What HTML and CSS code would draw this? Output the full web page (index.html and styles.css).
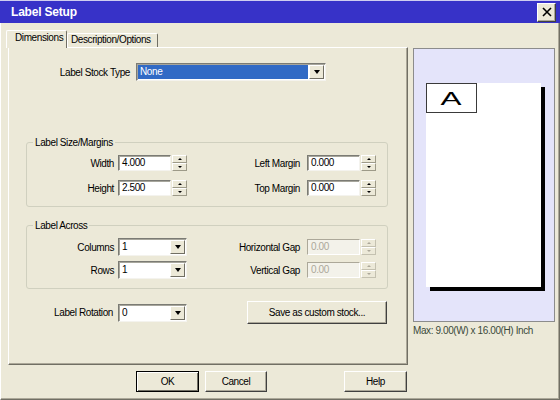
FILE: index.html
```html
<!DOCTYPE html>
<html>
<head>
<meta charset="utf-8">
<title>Label Setup</title>
<link rel="stylesheet" href="styles.css">
</head>
<body>
<div class="window">
  <div class="titlebar">
    <span class="title">Label Setup</span>
    <span class="close"><svg width="10" height="10" viewBox="0 0 10 10"><path d="M1 1L9 9M9 1L1 9" stroke="#000" stroke-width="1.6" fill="none"/></svg></span>
  </div>
  <div class="client">
    <div class="main">
      <div class="tabs">
        <div class="tab active">Dimensions</div>
        <div class="tab">Description/Options</div>
      </div>
      <div class="panel">
        <div class="stock-row">
          <span class="stock-lbl">Label Stock Type</span>
          <div class="combo stock-combo"><span class="combo-text sel">None</span><span class="drop"><i class="tri-down"></i></span></div>
        </div>

        <fieldset class="group g1">
          <legend>Label Size/Margins</legend>
          <div class="grid g1grid">
            <span class="lbl">Width</span>
            <div class="spin"><span class="spin-input">4.000</span><span class="spin-btns"><span class="sb"><i class="tri-up"></i></span><span class="sb"><i class="tri-dn"></i></span></span></div>
            <span class="lbl lbl2">Left Margin</span>
            <div class="spin"><span class="spin-input">0.000</span><span class="spin-btns"><span class="sb"><i class="tri-up"></i></span><span class="sb"><i class="tri-dn"></i></span></span></div>
            <span class="lbl">Height</span>
            <div class="spin"><span class="spin-input">2.500</span><span class="spin-btns"><span class="sb"><i class="tri-up"></i></span><span class="sb"><i class="tri-dn"></i></span></span></div>
            <span class="lbl lbl2">Top Margin</span>
            <div class="spin"><span class="spin-input">0.000</span><span class="spin-btns"><span class="sb"><i class="tri-up"></i></span><span class="sb"><i class="tri-dn"></i></span></span></div>
          </div>
        </fieldset>

        <fieldset class="group g2">
          <legend>Label Across</legend>
          <div class="grid g2grid">
            <span class="lbl">Columns</span>
            <div class="combo small"><span class="combo-text">1</span><span class="drop"><i class="tri-down"></i></span></div>
            <span class="lbl lbl2">Horizontal Gap</span>
            <div class="spin disabled"><span class="spin-input">0.00</span><span class="spin-btns"><span class="sb"><i class="tri-up"></i></span><span class="sb"><i class="tri-dn"></i></span></span></div>
            <span class="lbl">Rows</span>
            <div class="combo small"><span class="combo-text">1</span><span class="drop"><i class="tri-down"></i></span></div>
            <span class="lbl lbl2">Vertical Gap</span>
            <div class="spin disabled"><span class="spin-input">0.00</span><span class="spin-btns"><span class="sb"><i class="tri-up"></i></span><span class="sb"><i class="tri-dn"></i></span></span></div>
          </div>
        </fieldset>

        <div class="rot-row">
          <span class="lbl rot-lbl">Label Rotation</span>
          <div class="combo small"><span class="combo-text">0</span><span class="drop"><i class="tri-down"></i></span></div>
          <button class="btn save">Save as custom stock...</button>
        </div>
      </div>
      <div class="buttons">
        <button class="btn ok">OK</button>
        <button class="btn cancel">Cancel</button>
        <button class="btn help">Help</button>
      </div>
    </div>
    <div class="side">
      <div class="preview">
        <div class="page">
          <div class="abox"><span class="aglyph">A</span></div>
        </div>
      </div>
      <div class="max">Max: 9.00(W) x 16.00(H) Inch</div>
    </div>
  </div>
</div>
</body>
</html>
```

FILE: styles.css
```css
* { box-sizing: border-box; }
html, body { margin: 0; padding: 0; }
body {
  width: 560px;
  height: 400px;
  overflow: hidden;
  background: #ece9d8;
  font-family: "Liberation Sans", Arial, sans-serif;
  font-size: 10px;
  letter-spacing: -0.4px;
  color: #000;
}
.window {
  width: 560px;
  height: 400px;
  display: flex;
  flex-direction: column;
  background: #ece9d8;
}
.titlebar {
  height: 23px;
  flex: none;
  background: #3732c8;
  border-top: 1px solid #cfcdf0;
  display: flex;
  align-items: center;
  justify-content: space-between;
  padding: 0 4px 0 11px;
}
.title {
  color: #fff;
  font-weight: bold;
  font-size: 12px;
  letter-spacing: -0.2px;
}
.close {
  width: 19px;
  height: 19px;
  background: #ece9d8;
  border: 1px solid;
  border-color: #fff #404040 #404040 #fff;
  box-shadow: inset -1px -1px 0 #aca899;
  display: flex;
  align-items: center;
  justify-content: center;
}
.client {
  flex: 1;
  display: flex;
  padding: 7px 4px 0 7px;
  border: 1px solid;
  border-top: none;
  border-color: #fff #716f64 #716f64 #fff;
  box-shadow: inset -1px -1px 0 #aca899;
}
.main {
  width: 400px;
  flex: none;
  display: flex;
  flex-direction: column;
}
.tabs {
  height: 17px;
  display: flex;
  align-items: flex-end;
  margin-left: -2px;
  position: relative;
  z-index: 1;
}
.tab {
  height: 14px;
  line-height: 12px;
  padding: 0 4px 0 3px;
  width: 91px;
  border: 1px solid;
  border-bottom: none;
  border-color: #fff #716f64 #716f64 #fff;
  border-radius: 2px 2px 0 0;
  white-space: nowrap;
}
.tab.active {
  height: 18px;
  width: 61px;
  line-height: 14px;
  margin-bottom: -1px;
  padding: 0 0 0 8px;
  background: #ece9d8;
}
.panel {
  height: 318px;
  border: 1px solid;
  border-color: #fff #716f64 #716f64 #fff;
  box-shadow: inset -1px -1px 0 #aca899;
  padding: 15px 0 0 17px;
}
.stock-row {
  display: flex;
  align-items: center;
  height: 18px;
}
.stock-lbl {
  width: 104px;
  text-align: right;
  margin-right: 6px;
}
.combo {
  height: 18px;
  display: flex;
  background: #fff;
  border: 1px solid;
  border-color: #7b7b74 #f4f3ee #f4f3ee #7b7b74;
  box-shadow: inset 1px 1px 0 #a7a69c;
  padding: 1px 1px 1px 1px;
}
.stock-combo { width: 190px; }
.combo.small { width: 69px; }
.combo-text {
  flex: 1;
  line-height: 14px;
  padding-left: 2px;
}
.combo-text.sel {
  background: #316ac5;
  color: #fff;
  margin-right: 1px;
}
.drop {
  width: 15px;
  flex: none;
  background: #ece9d8;
  border: 1px solid;
  border-color: #fff #716f64 #716f64 #fff;
  display: flex;
  align-items: center;
  justify-content: center;
}
.tri-down {
  display: block;
  width: 0;
  height: 0;
  border-left: 3.5px solid transparent;
  border-right: 3.5px solid transparent;
  border-top: 4px solid #000;
}
.group {
  width: 362px;
  margin: 0;
  border: 1px solid #d0d0bf;
  border-radius: 3px;
  padding: 6px 0 10px 0;
  min-width: 0;
}
.group legend {
  margin-left: 6px;
  padding: 0 2px;
  line-height: 13px;
}
.g1 { margin-top: 55px; }
.g2 { margin-top: 12px; padding-bottom: 9px; }
.grid {
  display: grid;
  grid-template-columns: 88px 69px 114px 69px;
  column-gap: 3px;
  align-items: center;
}
.g1grid { row-gap: 9px; grid-auto-rows: 16px; }
.g2grid { row-gap: 5px; grid-auto-rows: 18px; }
.lbl {
  text-align: right;
  padding-right: 1px;
  white-space: nowrap;
}
.lbl2 { padding-right: 4px; }
.spin {
  display: flex;
  height: 16px;
  width: 69px;
}
.spin-input {
  width: 54px;
  height: 16px;
  background: #fff;
  border: 1px solid;
  border-color: #7b7b74 #f4f3ee #f4f3ee #7b7b74;
  box-shadow: inset 1px 1px 0 #a7a69c;
  line-height: 14px;
  padding-left: 3px;
}
.spin-btns {
  width: 15px;
  display: flex;
  flex-direction: column;
  margin-left: 1px;
}
.sb {
  flex: 1;
  background: #ece9d8;
  border: 1px solid;
  border-color: #fff #9d9a88 #9d9a88 #fff;
  display: flex;
  align-items: center;
  justify-content: center;
}
.tri-up, .tri-dn {
  display: block;
  width: 0;
  height: 0;
  border-left: 2px solid transparent;
  border-right: 2px solid transparent;
}
.tri-up { border-bottom: 2px solid #000; }
.tri-dn { border-top: 2px solid #000; }
.spin.disabled .spin-input {
  background: #f3f2ea;
  color: #aca899;
  border-color: #aca899 #fff #fff #aca899;
  box-shadow: none;
}
.spin.disabled .sb { border-color: #fff #c4c1b0 #c4c1b0 #fff; }
.spin.disabled .tri-up { border-bottom-color: #aca899; }
.spin.disabled .tri-dn { border-top-color: #aca899; }
.rot-row {
  display: flex;
  align-items: center;
  width: 361px;
  height: 23px;
  margin-top: 12px;
}
.rot-lbl { width: 88px; margin-right: 4px; }
.btn {
  font: inherit;
  letter-spacing: inherit;
  color: #000;
  background: #ece9d8;
  border: 1px solid;
  border-color: #fff #404040 #404040 #fff;
  box-shadow: inset -1px -1px 0 #aca899;
  padding: 0;
  margin: 0;
  height: 21px;
}
.save {
  margin-left: auto;
  width: 140px;
  height: 23px;
}
.buttons {
  display: flex;
  margin-top: 6px;
  height: 21px;
}
.ok {
  width: 63px;
  margin-left: 128px;
  border-color: #000;
  box-shadow: inset 1px 1px 0 #fff, inset -1px -1px 0 #716f64;
}
.cancel {
  width: 62px;
  margin-left: 6px;
}
.help {
  width: 63px;
  margin-left: auto;
  margin-right: 1px;
}
.side {
  width: 142px;
  flex: none;
  margin-left: 5px;
  padding-top: 18px;
}
.preview {
  height: 274px;
  border: 1px solid #8c8c8c;
  background: #e4e4fa;
  padding: 34px 0 0 12px;
}
.page {
  width: 115px;
  height: 204px;
  background: #fff;
  box-shadow: 4px 4px 0 #000;
}
.abox {
  width: 51px;
  height: 30px;
  border: 1px solid #3a3a3a;
  display: flex;
  align-items: center;
  justify-content: center;
}
.aglyph {
  display: inline-block;
  font-size: 18px;
  line-height: 18px;
  letter-spacing: 0;
  transform: scaleX(1.75);
  margin-top: 1px;
}
.max {
  margin-top: 3px;
  line-height: 12px;
  color: #3b4a3b;
  white-space: nowrap;
}
```
